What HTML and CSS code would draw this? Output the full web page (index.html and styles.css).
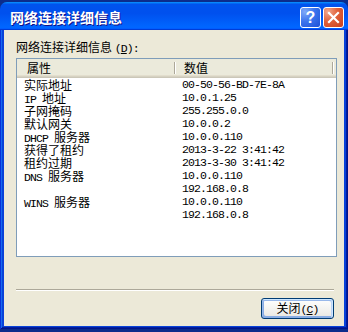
FILE: index.html
```html
<!DOCTYPE html>
<html lang="zh-CN">
<head>
  <meta charset="UTF-8" />
  <title>网络连接详细信息</title>
  <link rel="stylesheet" href="styles.css">
</head>
<body>

  <div class="window">
    <div class="titlebar">
      <span class="title">网络连接详细信息</span>
      <div class="title-buttons">
        <button class="tb-btn help">?</button>
        <button class="tb-btn close">
          <svg width="13" height="13" viewBox="0 0 13 13">
            <path d="M2 2 L11 11 M11 2 L2 11" stroke="#fff" stroke-width="2.2" stroke-linecap="square" fill="none"/>
          </svg>
        </button>
      </div>
    </div>

    <div class="frame">
      <div class="content">
        <div class="label">网络连接详细信息 <span class="en">(<u>D</u>):</span></div>

        <div class="listview">
          <div class="lv-header">
            <div class="hd-cell first">属性</div>
            <div class="hd-cell second">数值</div>
            <div class="hd-cell rest"></div>
          </div>
          <div class="lv-rows">
            <div class="row"><span>实际地址</span><span class="en">00-50-56-BD-7E-8A</span></div>
            <div class="row"><span><span class="en">IP </span>地址</span><span class="en">10.0.1.25</span></div>
            <div class="row"><span>子网掩码</span><span class="en">255.255.0.0</span></div>
            <div class="row"><span>默认网关</span><span class="en">10.0.0.2</span></div>
            <div class="row"><span><span class="en">DHCP </span>服务器</span><span class="en">10.0.0.110</span></div>
            <div class="row"><span>获得了租约</span><span class="en">2013-3-22 3:41:42</span></div>
            <div class="row"><span>租约过期</span><span class="en">2013-3-30 3:41:42</span></div>
            <div class="row"><span><span class="en">DNS </span>服务器</span><span class="en">10.0.0.110</span></div>
            <div class="row"><span></span><span class="en">192.168.0.8</span></div>
            <div class="row"><span><span class="en">WINS </span>服务器</span><span class="en">10.0.0.110</span></div>
            <div class="row"><span></span><span class="en">192.168.0.8</span></div>
          </div>
        </div>

        <div class="separator"></div>

        <div class="actions">
          <button class="xp-button">关闭<span class="en">(<u>C</u>)</span></button>
        </div>
      </div>
    </div>
  </div>

</body>
</html>
```

FILE: styles.css
```css
body {
  margin: 0;
  padding: 0;
  background-color: #0b2c8c;
  font-family: "Noto Sans CJK SC", "Liberation Sans", sans-serif;
  font-size: 12px;
  color: #000;
  overflow: hidden;
}

.en {
  font-family: "Liberation Mono", monospace;
  font-size: 11.5px;
  letter-spacing: -0.9px;
}

.window {
  width: 348px;
  height: 327px;
  margin-top: 2px;
  display: flex;
  flex-direction: column;
}

.titlebar {
  height: 28px;
  flex: none;
  display: flex;
  align-items: flex-start;
  justify-content: space-between;
  border-radius: 7px 7px 0 0;
  background: linear-gradient(180deg, #0997ff, #0053ee 8%, #0050ee 40%, #0066ff 88%, #0066ff 93%, #005bff 95%, #003dd7 96%, #003dd7);
}

.title {
  color: #fff;
  font-weight: bold;
  font-size: 14px;
  letter-spacing: 0;
  line-height: 16px;
  padding: 7px 0 0 10px;
  text-shadow: 1px 1px #0f1089;
}

.title-buttons {
  display: flex;
  gap: 2px;
  padding: 5px 4px 0 0;
}

.tb-btn {
  width: 21px;
  height: 21px;
  padding: 0;
  border: 1px solid #fff;
  border-radius: 3px;
  display: flex;
  align-items: center;
  justify-content: center;
  color: #fff;
  font-family: "Liberation Sans", sans-serif;
  font-weight: bold;
  font-size: 16px;
  line-height: 1;
}

.help {
  background: radial-gradient(circle at 20% 20%, #7fa9f8 0%, #3c74ee 45%, #1c50d6 100%);
}

.close {
  background: radial-gradient(circle at 20% 20%, #f2a88d 0%, #e0603a 45%, #c8401d 100%);
}

.frame {
  flex: 1;
  display: flex;
  padding: 0 4px 3px 4px;
  background-color: #0842d9;
  box-shadow: inset 1px 0 #0831d9, inset -1px -1px #00138c, inset 2px 0 #166aee, inset -2px -2px #001ea0;
}

.content {
  flex: 1;
  background-color: #ece9d8;
  padding: 10px 0 0 12px;
  display: flex;
  flex-direction: column;
}

.label {
  line-height: 14px;
  height: 14px;
}

.listview {
  margin-top: 4px;
  width: 321px;
  height: 199px;
  box-sizing: border-box;
  border: 1px solid #7f9db9;
  background-color: #fff;
}

.lv-header {
  display: grid;
  grid-template-columns: 158px 158px 1fr;
  height: 19px;
  background-color: #ebeadb;
  box-shadow: inset 0 -1px #cbc7b8, inset 0 -2px #d6d2c2, inset 0 -3px #e2decd;
}

.hd-cell {
  position: relative;
  line-height: 17px;
  padding-left: 10px;
}

.hd-cell.second {
  padding-left: 9px;
}

.hd-cell.first::after,
.hd-cell.second::after {
  content: "";
  position: absolute;
  right: 0;
  top: 3px;
  bottom: 4px;
  width: 1px;
  background-color: #aca899;
  box-shadow: 1px 0 #fff;
}

.row {
  display: grid;
  grid-template-columns: 158px 1fr;
  height: 13px;
  line-height: 13px;
}

.row > span {
  padding-left: 7px;
}

.separator {
  margin-top: 32px;
  width: 318px;
  height: 1px;
  background-color: #aca899;
  border-bottom: 1px solid #fff;
}

.actions {
  display: flex;
  width: 318px;
  justify-content: flex-end;
  margin-top: 7px;
}

.xp-button {
  width: 73px;
  height: 21px;
  padding: 0;
  font-family: "Noto Sans CJK SC", sans-serif;
  font-size: 12px;
  line-height: 17px;
  color: #000;
  border: 1px solid #003c74;
  border-radius: 3px;
  background: linear-gradient(180deg, #fff, #ecebe6 86%, #d6d0c5);
  box-shadow: inset -1px 1px #cee7ff, inset 1px 2px #98b8ea, inset -2px 2px #bcd4f6, inset 1px -1px #89ade4, inset 2px -2px #89ade4;
}
```
